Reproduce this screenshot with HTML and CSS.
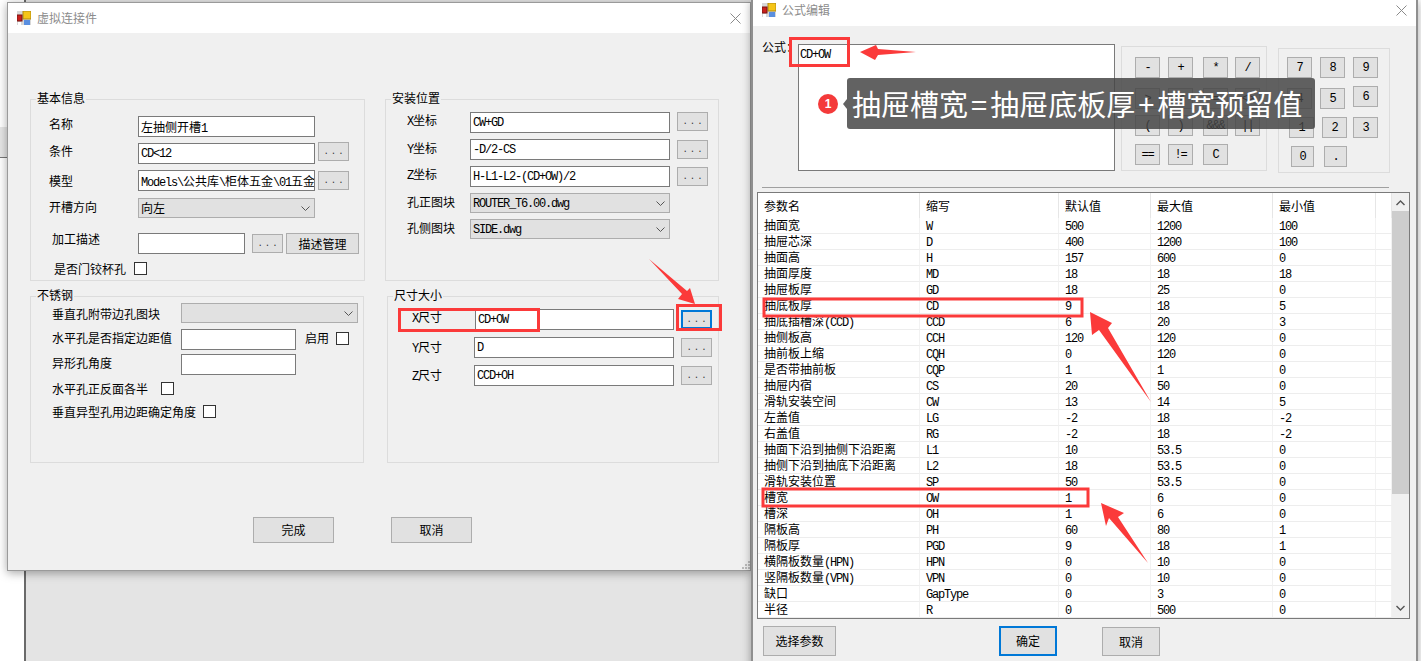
FILE: index.html
```html
<!DOCTYPE html>
<html lang="zh-CN">
<head>
<meta charset="utf-8">
<title>虚拟连接件 / 公式编辑</title>
<link rel="stylesheet" href="styles.css">
</head>
<body>
<div class="desk">
  <div class="backdrop-strip"></div>
  <div class="backdrop-main"></div>

  <section class="win win-a">
    <header class="titlebar tb-a">
      <svg class="appicon" width="14" height="14" viewBox="0 0 14 14"><rect x="0" y="0" width="14" height="14" fill="#d8d8d8"/><rect x="6" y="0" width="8" height="8" fill="#f5c518" stroke="#b08a10"/><rect x="0" y="4" width="5" height="6" fill="#c8201c" stroke="#7a1210"/><rect x="7" y="9" width="6" height="5" fill="#5a8fe0"/><rect x="1" y="11" width="3" height="3" fill="#fff"/></svg>
      <span class="wintitle">虚拟连接件</span>
      <svg class="closex" width="11" height="11" viewBox="0 0 11 11"><path d="M0.5 0.5L10.5 10.5M10.5 0.5L0.5 10.5" stroke="#8a8a8a" fill="none"/></svg>
    </header>
    <div class="form-body">
      <div class="groups">
        <div class="group g-basic">
          <span class="legend">基本信息</span>
          <div class="row r-first"><span class="lab w107 p18">名称</span><div class="inp w177">左抽侧开槽<span class="m">1</span></div></div>
          <div class="row r6"><span class="lab w107 p18">条件</span><div class="inp w177 m">CD&lt;12</div><div class="btn dots ml3 up1">...</div></div>
          <div class="row r6"><span class="lab w107 p18 dn3">模型</span><div class="inp w177 clip"><span class="m">Models\</span>公共库<span class="m">\</span>柜体五金<span class="m">\01</span>五金</div><div class="btn dots ml3 dn1">...</div></div>
          <div class="row r7"><span class="lab w107 p18 dn1">开槽方向</span><div class="sel w177">向左<svg class="chev" width="9" height="5" viewBox="0 0 9 5"><path d="M0.5 0.5L4.5 4.5L8.5 0.5" stroke="#555" fill="none"/></svg></div></div>
          <div class="row r15"><span class="lab w107 p21 up2">加工描述</span><div class="inp w107b"></div><div class="btn dots ml7 dn1">...</div><div class="btn btn-manage ml3">描述管理</div></div>
          <div class="row r8 check-row"><span class="lab p23">是否门铰杯孔</span><span class="cb ml8"></span></div>
        </div>

        <div class="group g-pos">
          <span class="legend">安装位置</span>
          <div class="row r-first-b"><span class="lab w84 p21"><span class="m">X</span>坐标</span><div class="inp w200 m">CW+GD</div><div class="btn dots ml7">...</div></div>
          <div class="row r6"><span class="lab w84 p21 dn1"><span class="m">Y</span>坐标</span><div class="inp w200 m">-D/2-CS</div><div class="btn dots ml7 dn1">...</div></div>
          <div class="row r6"><span class="lab w84 p21"><span class="m">Z</span>坐标</span><div class="inp w200 m">H-L1-L2-(CD+OW)/2</div><div class="btn dots ml7 dn1">...</div></div>
          <div class="row r6"><span class="lab w84 p21 dn1">孔正图块</span><div class="sel w200 m">ROUTER_T6.00.dwg<svg class="chev" width="9" height="5" viewBox="0 0 9 5"><path d="M0.5 0.5L4.5 4.5L8.5 0.5" stroke="#555" fill="none"/></svg></div></div>
          <div class="row r6"><span class="lab w84 p21 dn1">孔侧图块</span><div class="sel w200 m">SIDE.dwg<svg class="chev" width="9" height="5" viewBox="0 0 9 5"><path d="M0.5 0.5L4.5 4.5L8.5 0.5" stroke="#555" fill="none"/></svg></div></div>
        </div>

        <div class="group g-steel">
          <span class="legend">不锈钢</span>
          <div class="row r-first-c"><span class="lab w150 p21 dn3">垂直孔附带边孔图块</span><div class="sel w177"><svg class="chev" width="9" height="5" viewBox="0 0 9 5"><path d="M0.5 0.5L4.5 4.5L8.5 0.5" stroke="#555" fill="none"/></svg></div></div>
          <div class="row r6"><span class="lab w150 p21 dn1">水平孔是否指定边距值</span><div class="inp w115"></div><span class="lab ml9 dn1">启用</span><span class="cb ml7 dn3"></span></div>
          <div class="row r4"><span class="lab w150 p21 dn1">异形孔角度</span><div class="inp w115"></div></div>
          <div class="row r7 check-row"><span class="lab w130 p21">水平孔正反面各半</span><span class="cb"></span></div>
          <div class="row r10 check-row"><span class="lab w172 p21">垂直异型孔用边距确定角度</span><span class="cb"></span></div>
        </div>

        <div class="group g-size">
          <span class="legend">尺寸大小</span>
          <div class="row r-first-d"><span class="lab w87 p24"><span class="m">X</span>尺寸</span><div class="inp w199 m">CD+OW</div><div class="btn dots ml7 dn1 focus">...</div></div>
          <div class="row r7"><span class="lab w86 p24 dn2"><span class="m">Y</span>尺寸</span><div class="inp w200 m">D</div><div class="btn dots ml7 dn1">...</div></div>
          <div class="row r7"><span class="lab w86 p24 dn2"><span class="m">Z</span>尺寸</span><div class="inp w200 m">CCD+OH</div><div class="btn dots ml7 dn1">...</div></div>
        </div>
      </div>
      <div class="actions">
        <div class="btn btn-big">完成</div>
        <div class="btn btn-big">取消</div>
      </div>
    </div>
    <svg class="grip" width="10" height="10" viewBox="0 0 10 10"><path d="M8 1h2v2H8zM5 4h2v2H5zM8 4h2v2H8zM2 7h2v2H2zM5 7h2v2H5zM8 7h2v2H8z" fill="#bbb"/></svg>
  </section>

  <section class="win win-b">
    <header class="titlebar tb-b">
      <svg class="appicon" width="14" height="14" viewBox="0 0 14 14"><rect x="0" y="0" width="14" height="14" fill="#d8d8d8"/><rect x="6" y="0" width="8" height="8" fill="#f5c518" stroke="#b08a10"/><rect x="0" y="4" width="5" height="6" fill="#c8201c" stroke="#7a1210"/><rect x="7" y="9" width="6" height="5" fill="#5a8fe0"/><rect x="1" y="11" width="3" height="3" fill="#fff"/></svg>
      <span class="wintitle">公式编辑</span>
      <svg class="closex" width="11" height="11" viewBox="0 0 11 11"><path d="M0.5 0.5L10.5 10.5M10.5 0.5L0.5 10.5" stroke="#8a8a8a" fill="none"/></svg>
    </header>
    <div class="formula-top">
      <span class="lab formula-lab">公式：</span>
      <div class="formula-box m">CD+OW</div>
      <div class="pad pad-ops">
        <div class="key m">-</div><div class="key m">+</div><div class="key m">*</div><div class="key m">/</div>
        <div class="key m">&gt;</div><div class="key m">&lt;</div><div class="key m">=</div><div class="key m">&lt;&gt;</div>
        <div class="key m">(</div><div class="key m">)</div><div class="key m">&amp;&amp;&amp;</div><div class="key m">||</div>
        <div class="key m">==</div><div class="key m">!=</div><div class="key key-c m">C</div>
      </div>
      <div class="pad pad-num">
        <div class="key m">7</div><div class="key m">8</div><div class="key m">9</div>
        <div class="key m">4</div><div class="key m">5</div><div class="key key-six m">6</div>
        <div class="key key-sh m">1</div><div class="key key-sh m">2</div><div class="key m">3</div>
        <div class="key key-zero m">0</div><div class="key key-zero m">.</div>
      </div>
    </div>
    <div class="sep"></div>
    <div class="gridwrap">
      <table class="params">
        <colgroup><col class="c1"><col class="c2"><col class="c3"><col class="c4"><col class="c5"><col class="c6"></colgroup>
        <thead><tr><th>参数名</th><th>缩写</th><th>默认值</th><th>最大值</th><th>最小值</th><th></th></tr></thead>
        <tbody>
          <tr><td>抽面宽</td><td class="m">W</td><td class="m">500</td><td class="m">1200</td><td class="m">100</td><td></td></tr>
          <tr><td>抽屉芯深</td><td class="m">D</td><td class="m">400</td><td class="m">1200</td><td class="m">100</td><td></td></tr>
          <tr><td>抽面高</td><td class="m">H</td><td class="m">157</td><td class="m">600</td><td class="m">0</td><td></td></tr>
          <tr><td>抽面厚度</td><td class="m">MD</td><td class="m">18</td><td class="m">18</td><td class="m">18</td><td></td></tr>
          <tr><td>抽屉板厚</td><td class="m">GD</td><td class="m">18</td><td class="m">25</td><td class="m">0</td><td></td></tr>
          <tr><td>抽底板厚</td><td class="m">CD</td><td class="m">9</td><td class="m">18</td><td class="m">5</td><td></td></tr>
          <tr><td>抽底插槽深<span class="m">(CCD)</span></td><td class="m">CCD</td><td class="m">6</td><td class="m">20</td><td class="m">3</td><td></td></tr>
          <tr><td>抽侧板高</td><td class="m">CCH</td><td class="m">120</td><td class="m">120</td><td class="m">0</td><td></td></tr>
          <tr><td>抽前板上缩</td><td class="m">CQH</td><td class="m">0</td><td class="m">120</td><td class="m">0</td><td></td></tr>
          <tr><td>是否带抽前板</td><td class="m">CQP</td><td class="m">1</td><td class="m">1</td><td class="m">0</td><td></td></tr>
          <tr><td>抽屉内宿</td><td class="m">CS</td><td class="m">20</td><td class="m">50</td><td class="m">0</td><td></td></tr>
          <tr><td>滑轨安装空间</td><td class="m">CW</td><td class="m">13</td><td class="m">14</td><td class="m">5</td><td></td></tr>
          <tr><td>左盖值</td><td class="m">LG</td><td class="m">-2</td><td class="m">18</td><td class="m">-2</td><td></td></tr>
          <tr><td>右盖值</td><td class="m">RG</td><td class="m">-2</td><td class="m">18</td><td class="m">-2</td><td></td></tr>
          <tr><td>抽面下沿到抽侧下沿距离</td><td class="m">L1</td><td class="m">10</td><td class="m">53.5</td><td class="m">0</td><td></td></tr>
          <tr><td>抽侧下沿到抽底下沿距离</td><td class="m">L2</td><td class="m">18</td><td class="m">53.5</td><td class="m">0</td><td></td></tr>
          <tr><td>滑轨安装位置</td><td class="m">SP</td><td class="m">50</td><td class="m">53.5</td><td class="m">0</td><td></td></tr>
          <tr><td>槽宽</td><td class="m">OW</td><td class="m">1</td><td class="m">6</td><td class="m">0</td><td></td></tr>
          <tr><td>槽深</td><td class="m">OH</td><td class="m">1</td><td class="m">6</td><td class="m">0</td><td></td></tr>
          <tr><td>隔板高</td><td class="m">PH</td><td class="m">60</td><td class="m">80</td><td class="m">1</td><td></td></tr>
          <tr><td>隔板厚</td><td class="m">PGD</td><td class="m">9</td><td class="m">18</td><td class="m">1</td><td></td></tr>
          <tr><td>横隔板数量<span class="m">(HPN)</span></td><td class="m">HPN</td><td class="m">0</td><td class="m">10</td><td class="m">0</td><td></td></tr>
          <tr><td>竖隔板数量<span class="m">(VPN)</span></td><td class="m">VPN</td><td class="m">0</td><td class="m">10</td><td class="m">0</td><td></td></tr>
          <tr><td>缺口</td><td class="m">GapType</td><td class="m">0</td><td class="m">3</td><td class="m">0</td><td></td></tr>
          <tr><td>半径</td><td class="m">R</td><td class="m">0</td><td class="m">500</td><td class="m">0</td><td></td></tr>
        </tbody>
      </table>
      <div class="scrollbar">
        <svg class="sb-arrow" width="9" height="6" viewBox="0 0 9 6"><path d="M0.5 5L4.5 1L8.5 5" stroke="#555" stroke-width="1.4" fill="none"/></svg>
        <div class="sb-thumb"></div>
        <svg class="sb-arrow sb-down" width="9" height="6" viewBox="0 0 9 6"><path d="M0.5 1L4.5 5L8.5 1" stroke="#555" stroke-width="1.4" fill="none"/></svg>
      </div>
    </div>
    <div class="footer">
      <div class="btn foot-pick">选择参数</div>
      <div class="btn foot-ok">确定</div>
      <div class="btn foot-cancel">取消</div>
    </div>
  </section>

  <svg class="marks" width="1421" height="661" viewBox="0 0 1421 661">
    <g fill="none" stroke="#fb3a3a" stroke-width="3">
      <rect x="399.5" y="309.5" width="139" height="21"/>
      <rect x="677.5" y="305.5" width="43" height="24"/>
      <rect x="790.5" y="38.5" width="58" height="27"/>
      <rect x="764" y="299" width="318" height="17"/>
      <rect x="763" y="489" width="325" height="17"/>
    </g>
    <g fill="#fb3a3a">
      <polygon points="649,259 687,291 690,288 695,304 678,299 682,294"/>
      <polygon points="860,52 876,45 878,49 916,52 878,55 875,60"/>
      <polygon points="1090,312 1112,323 1108,328 1151,402 1099,330 1092,335"/>
      <polygon points="1101,503 1124,513 1118,517 1148,563 1109,518 1106,526"/>
    </g>
  </svg>

  <div class="callout">
    <span class="callout-num">1</span>
    <div class="callout-box">抽屉槽宽<span class="sym">=</span>抽屉底板厚<span class="sym">+</span>槽宽预留值</div>
  </div>
</div>
</body>
</html>
```
FILE: styles.css
```css
* { box-sizing: border-box; }
html, body { margin: 0; padding: 0; }
body {
  width: 1421px;
  height: 661px;
  overflow: hidden;
  background: #fff;
  font: 12px/16px "Noto Sans CJK SC", "Liberation Sans", sans-serif;
  color: #000;
}
.desk { position: relative; width: 1421px; height: 661px; overflow: hidden; }
.backdrop-strip {
  position: absolute; left: 0; top: 127px; width: 8px; height: 31px;
  background: #e6e6e6; border-bottom: 1px solid #777;
}
.backdrop-main {
  position: absolute; left: 24px; top: 0; width: 740px; height: 661px;
  background: #e4e4e4; border-left: 2px solid #6a6a6a;
}
.win {
  position: absolute;
  background: #f0f0f0;
  border: 1px solid #9a9a9a;
  box-shadow: 0 2px 9px rgba(0, 0, 0, .35);
}
.win-a { left: 7px; top: 2px; width: 744px; height: 569px; }
.win-b { left: 751px; top: -1px; width: 667px; height: 670px; border-width: 1px 2px 1px 2px; border-color: #8f8f8f; }
.titlebar { display: flex; align-items: center; background: #fff; }
.tb-a { height: 30px; padding: 0 9px 0 9px; }
.tb-b { height: 26px; padding: 0 9px 6px 9px; }
.appicon { flex: none; }
.wintitle { margin-left: 6px; color: #8c8c8c; flex: 1; }
.closex { flex: none; }

.m { font-family: "Liberation Mono", "Noto Sans CJK SC", monospace; font-size: 12px; letter-spacing: -1.2px; }
span.m { line-height: 0; }

/* form window */
.form-body { padding: 66px 0 0 22px; }
.groups { display: grid; grid-template-columns: 355px 334px; grid-template-rows: 182px 167px; row-gap: 15px; }
.group { position: relative; border: 1px solid #dcdcdc; }
.g-basic { width: 335px; }
.g-pos { width: 334px; }
.g-steel { width: 334px; }
.g-size { width: 332px; margin-left: 2px; }
.legend { position: absolute; left: 5px; top: -10px; padding: 0 1px; background: #f0f0f0; }

.row { display: flex; align-items: flex-start; }
.r-first { margin-top: 16px; }
.r-first-b { margin-top: 12px; }
.r-first-c { margin-top: 6px; }
.r-first-d { margin-top: 12px; }
.r4 { margin-top: 4px; }
.r6 { margin-top: 6px; }
.r7 { margin-top: 7px; }
.r8 { margin-top: 8px; }
.r10 { margin-top: 10px; }
.r15 { margin-top: 15px; }
.check-row { align-items: center; height: 13px; }

.lab { flex: none; white-space: nowrap; }
.w84 { width: 84px; }
.w86 { width: 86px; }
.w87 { width: 87px; }
.w107 { width: 107px; }
.w130 { width: 130px; }
.w150 { width: 150px; }
.w172 { width: 172px; }
.p18 { padding-left: 18px; }
.p21 { padding-left: 21px; }
.p23 { padding-left: 23px; }
.p24 { padding-left: 24px; }
.up1 { margin-top: -1px; }
.up2 { margin-top: -2px; }
.dn1 { margin-top: 1px; }
.dn2 { margin-top: 2px; }
.dn3 { margin-top: 3px; }
.ml3 { margin-left: 3px; }
.ml7 { margin-left: 7px; }
.ml8 { margin-left: 8px; }
.ml9 { margin-left: 9px; }

.inp {
  flex: none; height: 21px; padding-left: 2px; line-height: 19px;
  background: #fff; border: 1px solid #7a7a7a; white-space: nowrap; overflow: hidden;
}
.inp.m { line-height: 21px; }
.w107b { width: 107px; }
.w115 { width: 115px; }
.w177 { width: 177px; }
.w199 { width: 199px; }
.w200 { width: 200px; }
.clip { overflow: hidden; }
.sel {
  flex: none; height: 20px; position: relative; padding-left: 2px; line-height: 18px;
  background: #e1e1e1; border: 1px solid #adadad; white-space: nowrap;
}
.sel.m { line-height: 20px; }
.chev { position: absolute; right: 4px; top: 7px; }
.btn {
  flex: none; display: flex; align-items: center; justify-content: center;
  background: #e1e1e1; border: 1px solid #adadad;
}
.dots { width: 31px; height: 19px; font-family: "Liberation Mono", monospace; font-size: 9px; letter-spacing: 2px; padding-left: 2px; color: #333; }
.btn-manage { width: 73px; height: 21px; }
.focus { border: 2px solid #0078d7; }
.cb { flex: none; width: 13px; height: 13px; background: #fff; border: 1px solid #333; }

.actions { display: flex; gap: 57px; margin: 54px 0 0 223px; }
.btn-big { width: 81px; height: 26px; }
.grip { position: absolute; right: 0; bottom: 0; }

/* formula window */
.formula-top { display: flex; align-items: flex-start; height: 150px; }
.formula-lab { margin: 13px 0 0 9px; width: 36px; }
.formula-box {
  flex: none; width: 317px; height: 127px; margin-top: 18px; padding: 2px 1px 0;
  line-height: 16px; background: #fff; border: 1px solid #7a7a7a;
}
.pad { flex: none; display: grid; border: 1px solid #dcdcdc; justify-items: start; }
.pad-ops {
  width: 146px; height: 125px; margin: 20px 0 0 6px; padding: 10px 0 0 13px;
  grid-template-columns: 33px 35px 32px 25px; grid-template-rows: 31px 27px 29px 21px;
}
.pad-num {
  width: 112px; height: 125px; margin: 22px 0 0 11px; padding: 8px 0 0 8px;
  grid-template-columns: 33px 33px 33px; grid-template-rows: 31px 29px 29px 21px;
}
.key {
  width: 25px; height: 21px; display: flex; align-items: center; justify-content: center;
  background: #e1e1e1; border: 1px solid #adadad;
}
.key-six { margin-top: -2px; }
.key-sh { margin-left: 2px; }
.key-zero { width: 23px; margin-left: 4px; }
.sep { height: 1px; margin: 11px 27px 0 9px; background: #a0a0a0; }

.gridwrap {
  display: flex; height: 427px; width: 653px; margin: 4px 0 0 4px;
  background: #fff; border: 1px solid #7a7a7a; overflow: hidden;
}
.params { width: 634px; flex: none; table-layout: fixed; border-collapse: separate; border-spacing: 0; align-self: flex-start; }
.c1 { width: 162px; }
.c2 { width: 139px; }
.c3 { width: 92px; }
.c4 { width: 122px; }
.c5 { width: 103px; }
.c6 { width: 16px; }
.params th {
  height: 25px; padding: 0 0 0 6px; font-weight: 400; text-align: left;
  border-right: 1px solid #e6e6e6; background: #fff;
}
.params td {
  height: 16px; padding: 0 0 0 6px; line-height: 13px; white-space: nowrap; vertical-align: top;
  border-bottom: 1px solid #ededed; border-right: 1px solid #f2f2f2;
}
.params td.m { padding-top: 4px; line-height: 11px; }
.scrollbar { flex: 1; position: relative; display: flex; flex-direction: column; align-items: center; background: #f0f0f0; }
.sb-arrow { flex: none; margin-top: 7px; }
.sb-thumb { flex: none; width: 100%; height: 283px; margin-top: 5px; background: #cdcdcd; }
.sb-down { margin-top: auto; margin-bottom: 7px; }

.footer { display: flex; align-items: flex-start; padding: 7px 0 0 10px; }
.foot-pick { width: 73px; height: 30px; }
.foot-ok { width: 58px; height: 30px; margin-left: 163px; border: 2px solid #0078d7; }
.foot-cancel { width: 58px; height: 29px; margin: 1px 0 0 45px; }

/* annotations */
.marks { position: absolute; left: 0; top: 0; pointer-events: none; }
.callout { position: absolute; left: 818px; top: 78px; display: flex; align-items: center; }
.callout-num {
  width: 20px; height: 20px; border-radius: 50%; background: #f43a3a; color: #fff;
  font: 700 12px/20px "Liberation Sans", sans-serif; text-align: center;
}
.callout-box {
  position: relative; width: 468px; height: 51px; margin-left: 9px; border-radius: 3px;
  background: rgba(68, 68, 68, .84); color: #fff;
  font: 29px/51px "Noto Sans CJK SC", sans-serif; padding-left: 5px; white-space: nowrap;
}
.sym { padding: 0 3px; }
.callout-box::before {
  content: ""; position: absolute; left: -4px; top: 21px;
  border: 5px solid transparent; border-left: 0; border-right: 4px solid rgba(68, 68, 68, .84);
}
```
